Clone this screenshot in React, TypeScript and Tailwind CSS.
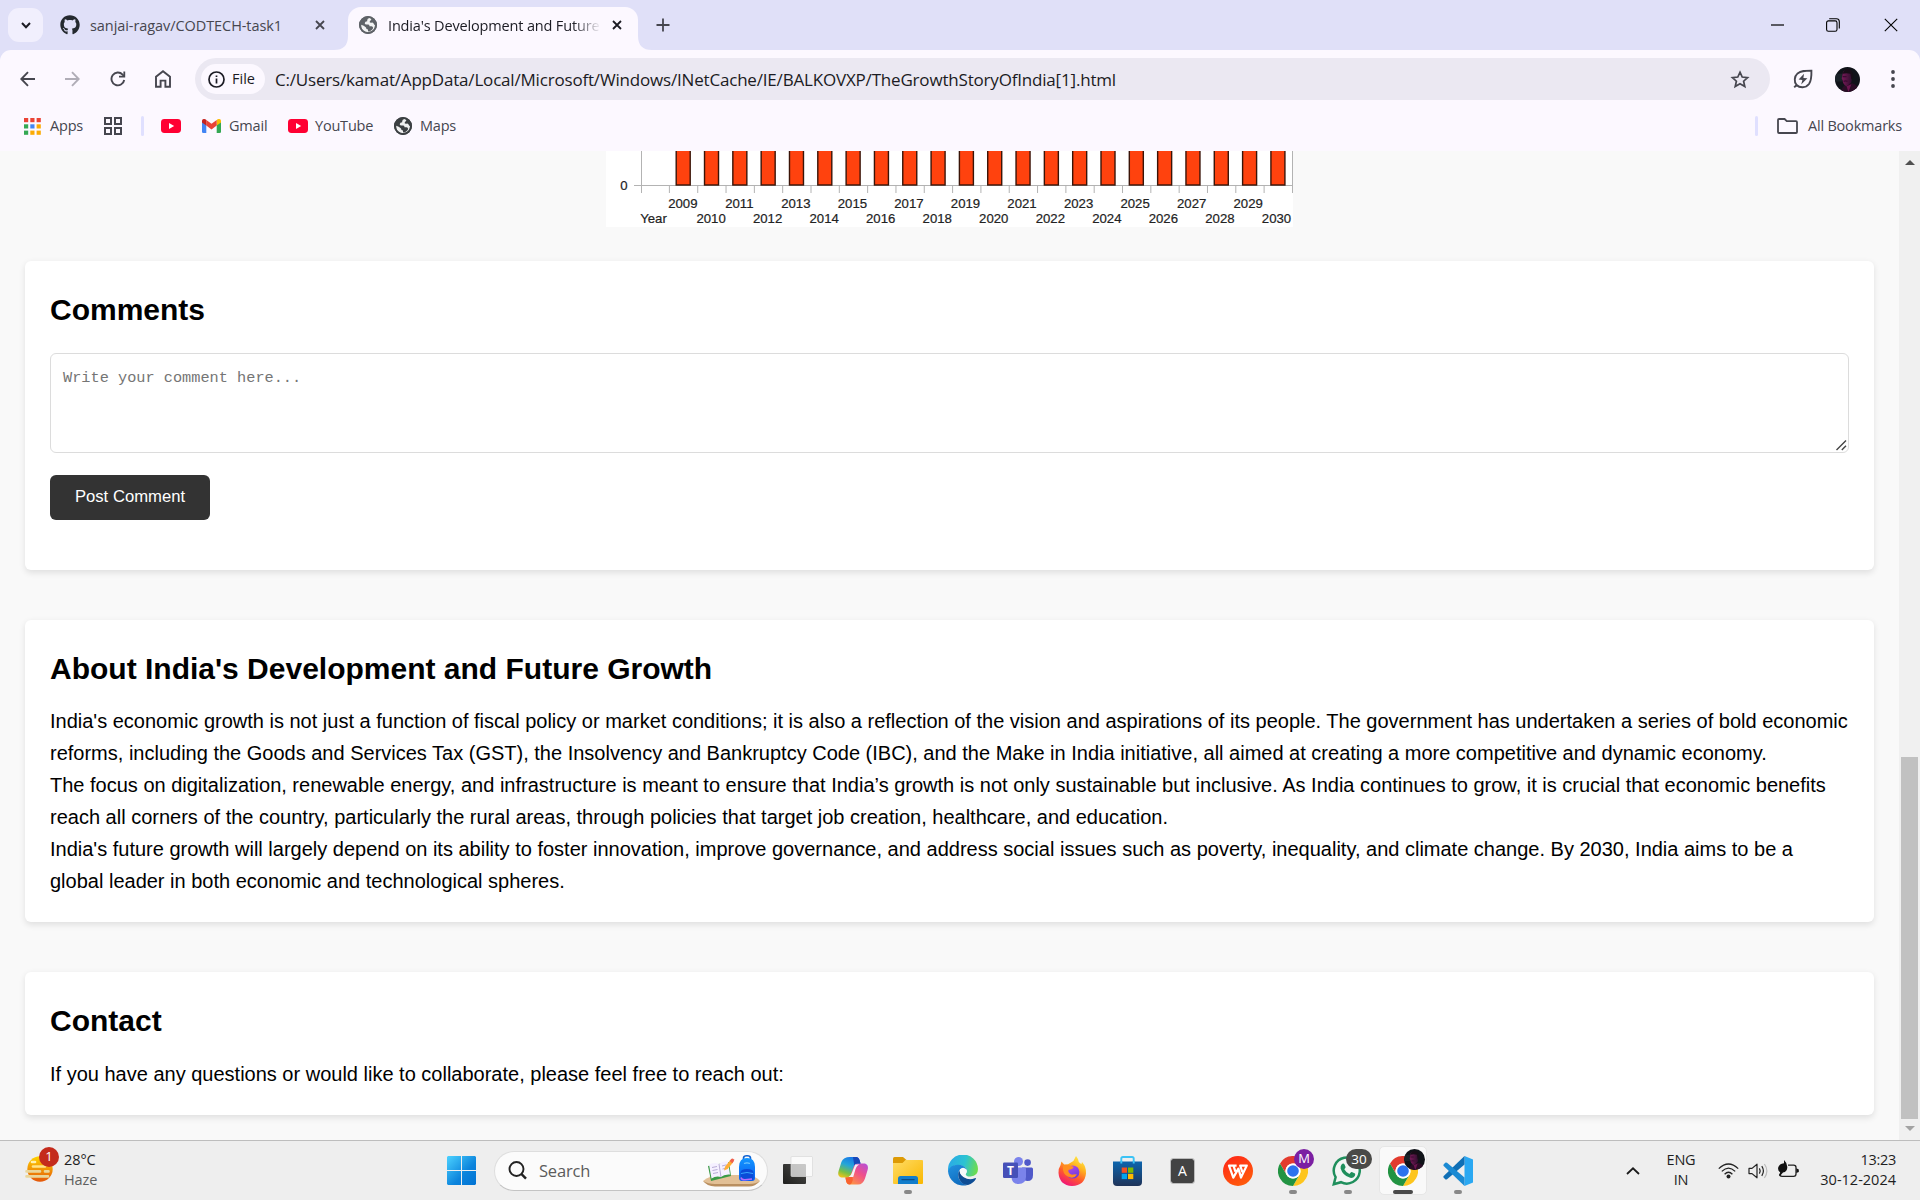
import type { ReactNode } from "react";
import { FaGithub } from "react-icons/fa";

const YEARS = Array.from({ length: 22 }, (_, i) => 2009 + i);

function Globe({ size, color }: { size: number; color: string }) {
  return (
    <svg width={size} height={size} viewBox="0 0 18 18" className="shrink-0">
      <circle cx="9" cy="9" r="9" fill={color} />
      <path d="M10.6 1.9 Q8.2 2.2 8.2 4.2 L8.2 5.2 Q6 5.2 5.7 7.2 Q5.8 8.4 7.6 8.4 L9.3 8.4 Q10.6 8.6 10.5 10.2 L12.6 10.3 Q13.9 10.6 14.2 12 Q12.6 15.2 9 15.6 L9 13.6 Q7 13.5 7 11.4 Q4.8 9.4 2.2 8.8 Q2 13.6 5.4 15.4 Q7.5 16.6 9.9 16.1 Q15.8 15 16 9 Q15.2 8.9 14.6 7.4 Q13.6 6.2 12.2 6.8 L10.8 6.6 L10.8 4.9 Q12.2 4.8 12.4 3 Z" fill="#fff" fillOpacity="0.92" />
      <circle cx="9" cy="9" r="8.1" fill="none" stroke={color} strokeWidth="1.8" />
    </svg>
  );
}

function YouTube() {
  return (
    <svg width="20" height="14" viewBox="0 0 20 14" className="shrink-0">
      <rect width="20" height="14" rx="3.4" fill="#ff0033" />
      <path d="M8 4 L13.2 7 L8 10 Z" fill="#fff" />
    </svg>
  );
}

function Avatar({ size, id }: { size: number; id: string }) {
  return (
    <svg width={size} height={size} viewBox="0 0 26 26" className="shrink-0">
      <defs>
        <clipPath id={id}><circle cx="13" cy="13" r="13" /></clipPath>
        <linearGradient id={id + "f"} x1="0" x2="1">
          <stop offset="0" stopColor="#7a1a5a" />
          <stop offset="1" stopColor="#2c0e2c" />
        </linearGradient>
      </defs>
      <g clipPath={`url(#${id})`}>
        <rect width="26" height="26" fill="#101319" />
        <path d="M0 7 H8 V15 H0 Z" fill="#1a2228" />
        <path d="M6 26 Q7 20 12 18 L18 17 Q24 19 26 26 Z" fill="#2a0d26" />
        <path d="M8 7 Q8 3 13 3 Q18 3 18 9 L17 16 L12 20 Q8 18 8 14 L7 12 Z" fill={`url(#${id}f)`} />
        <path d="M8 7 Q9 2 14 2 Q19 3 19 11 L17 13 L16 7 Q12 6 8 7 Z" fill="#170d17" />
        <path d="M8 10 H12 M9 15 Q11 14 13 15" stroke="#3b0b30" strokeWidth="1.3" fill="none" />
        <path d="M12 20 L14 26 L17 18 Z" fill="#6d1450" />
      </g>
    </svg>
  );
}

function TabCross({ color }: { color: string }) {
  return (
    <svg width="10" height="10" viewBox="0 0 10 10" className="shrink-0">
      <path d="M1 1 L9 9 M9 1 L1 9" stroke={color} strokeWidth="1.8" />
    </svg>
  );
}

function TabStrip() {
  return (
    <div className="flex h-[50px] shrink-0 items-end bg-[#e0e0f8]">
      <div className="mb-2 ml-2 flex h-[34px] w-[35px] shrink-0 items-center justify-center rounded-[11px] bg-[#f1effd]">
        <svg width="10" height="7" viewBox="0 0 10 7"><path d="M1 1 L5 5.2 L9 1" fill="none" stroke="#1b1b23" strokeWidth="2" /></svg>
      </div>
      <div className="ml-[17px] flex h-[50px] w-[266px] shrink-0 items-center">
        <FaGithub size={20} color="#24292f" className="shrink-0" />
        <span className="ml-[10px] w-[225px] whitespace-nowrap pt-px text-[14.5px] tracking-[-0.07px] text-[#46464f]">sanjai-ragav/CODTECH-task1</span>
        <TabCross color="#46464f" />
      </div>
      <svg width="14" height="14" viewBox="0 0 14 14" className="ml-[8px] shrink-0"><path d="M14 0 Q14 14 0 14 L14 14 Z" fill="#fcf8ff" /></svg>
      <div className="flex h-[43px] w-[290px] shrink-0 items-center rounded-t-[13px] bg-[#fcf8ff] pb-[7px] pl-[11px]">
        <Globe size={18} color="#5f6368" />
        <span className="ml-[11px] mr-[12px] w-[212px] whitespace-nowrap pt-px text-[14.5px] tracking-[-0.16px] text-[#1b1b23] [mask-image:linear-gradient(to_right,black_185px,transparent_213px)]">
          India's Development and Future
        </span>
        <TabCross color="#1b1b23" />
      </div>
      <svg width="14" height="14" viewBox="0 0 14 14" className="shrink-0"><path d="M0 0 Q0 14 14 14 L0 14 Z" fill="#fcf8ff" /></svg>
      <svg width="14" height="14" viewBox="0 0 14 14" className="mb-[18px] ml-1 shrink-0"><path d="M7 0.5 V13.5 M0.5 7 H13.5" stroke="#46464f" strokeWidth="1.8" /></svg>
      <div className="ml-auto mr-[22px] flex h-[50px] items-center">
        <svg width="13" height="2" viewBox="0 0 13 2" className="mr-[42px]"><rect y="0.4" width="13" height="1.2" fill="#000" /></svg>
        <svg width="14" height="14" viewBox="0 0 14 14" className="mr-[44px]">
          <rect x="0.6" y="2.9" width="10.4" height="10.4" rx="1.8" fill="none" stroke="#000" strokeWidth="1.1" />
          <path d="M3.2 0.7 H10.4 Q13.3 0.7 13.3 3.6 V10.6" fill="none" stroke="#000" strokeWidth="1.1" />
        </svg>
        <svg width="14" height="14" viewBox="0 0 14 14"><path d="M0.8 0.8 L13.2 13.2 M13.2 0.8 L0.8 13.2" stroke="#000" strokeWidth="1.1" /></svg>
      </div>
    </div>
  );
}

function Toolbar() {
  return (
    <div className="bg-[#e0e0f8]">
      <div className="flex h-[58px] items-center rounded-t-[11px] bg-[#fcf8ff] pl-5">
        <svg width="16" height="16" viewBox="0 0 16 16"><path d="M15 8 H1.5 M8 1.2 L1.3 8 L8 14.8" fill="none" stroke="#46464f" strokeWidth="1.9" /></svg>
        <svg width="16" height="16" viewBox="0 0 16 16" className="ml-7"><path d="M1 8 H14.5 M8 1.2 L14.7 8 L8 14.8" fill="none" stroke="#b0adb7" strokeWidth="1.9" /></svg>
        <svg width="16" height="16" viewBox="0 0 16 16" className="ml-[30px]">
          <path d="M14.2 9 A6.4 6.4 0 1 1 12.6 3.6 L14 5" fill="none" stroke="#46464f" strokeWidth="1.9" />
          <path d="M15.2 0.5 V6.6 H9 V4.8 H13.4 V0.5 Z" fill="#46464f" />
        </svg>
        <svg width="16" height="18" viewBox="0 0 16 18" className="ml-[29px]"><path d="M1 16.8 V6.8 L8 1.3 L15 6.8 V16.8 H10.4 V10.6 H5.6 V16.8 Z" fill="none" stroke="#46464f" strokeWidth="1.9" /></svg>
        <div className="ml-6 flex h-[42px] w-[1575px] shrink-0 items-center rounded-full bg-[#ebe8f2] pl-[6px]">
          <div className="flex h-[30px] w-[64px] shrink-0 items-center rounded-full bg-[#fcf8ff] pl-[7px]">
            <svg width="17" height="17" viewBox="0 0 17 17"><circle cx="8.5" cy="8.5" r="7.5" fill="none" stroke="#1b1b23" strokeWidth="1.7" /><path d="M8.5 7.5 V12.4 M8.5 4.4 V6.1" stroke="#1b1b23" strokeWidth="1.7" /></svg>
            <span className="ml-[7px] text-[14.5px] font-medium text-[#1b1b23]">File</span>
          </div>
          <span className="ml-[10px] whitespace-nowrap pt-px text-[17px] tracking-[-0.185px] text-[#1b1b23]">
            C:/Users/kamat/AppData/Local/Microsoft/Windows/INetCache/IE/BALKOVXP/TheGrowthStoryOfIndia[1].html
          </span>
          <svg width="20" height="19" viewBox="0 0 20 19" className="ml-auto mr-5"><path d="M10 2.2 L12.2 7 L17.6 7.6 L13.6 11.2 L14.8 16.5 L10 13.7 L5.2 16.5 L6.4 11.2 L2.4 7.6 L7.8 7 Z" fill="none" stroke="#46464f" strokeWidth="1.7" /></svg>
        </div>
        <svg width="20" height="20" viewBox="0 0 20 20" className="ml-[23px] shrink-0">
          <path d="M18.4 1.6 C18.6 8 18.4 11.6 16 15 C12.6 19.4 6.6 19 3.6 16 C0.8 12.6 1.2 7.4 4.6 4.4 C8 1.6 12 1.6 18.4 1.6 Z M3.6 16 L1.2 18.4" fill="none" stroke="#46464f" strokeWidth="1.9" />
          <path d="M11 4.8 L5.6 10.6 L9.4 10.9 L8.2 15.4 L14.4 9.3 L10.4 9 Z" fill="#46464f" />
        </svg>
        <div className="ml-[22px] shrink-0"><Avatar size={25} id="profile" /></div>
        <svg width="4" height="18" viewBox="0 0 4 18" className="ml-[31px] shrink-0"><g fill="#46464f"><circle cx="2" cy="2" r="1.9" /><circle cx="2" cy="9" r="1.9" /><circle cx="2" cy="16" r="1.9" /></g></svg>
      </div>
    </div>
  );
}

const DOTS = ["#ea4335", "#ea4335", "#ea4335", "#34a853", "#4285f4", "#fbab04", "#34a853", "#fbab04", "#fbab04"];

function Bookmarks() {
  return (
    <div className="flex h-[43px] shrink-0 items-center bg-[#fcf8ff] pb-[7px] pl-[24px] pr-[18px] text-[14.5px] tracking-[-0.2px] text-[#46464f]">
      <svg width="17" height="17" viewBox="0 0 17 17">
        {DOTS.map((c, i) => <rect key={i} x={(i % 3) * 6.3} y={Math.floor(i / 3) * 6.3} width="4.2" height="4.2" fill={c} />)}
      </svg>
      <span className="ml-[9px] w-[54px]">Apps</span>
      <svg width="18" height="18" viewBox="0 0 18 18"><path d="M1 1 H7 V7 H1 Z M11 1 H17 V7 H11 Z M1 11 H7 V17 H1 Z M11 11 H17 V17 H11 Z" fill="none" stroke="#46464f" strokeWidth="2" /></svg>
      <div className="ml-[19px] h-[20px] w-[3px] rounded bg-[#e0e0ff]" />
      <div className="ml-[17px]"><YouTube /></div>
      <svg width="19" height="14" viewBox="0 0 19 14" className="ml-[21px]">
        <path d="M0 2 V12.7 Q0 14 1.3 14 H4.3 V5 Z" fill="#4285f4" />
        <path d="M19 2 V12.7 Q19 14 17.7 14 H14.7 V5 Z" fill="#34a853" />
        <path d="M14.7 1.3 V6.6 L19 3.4 V2 C19 0 16.8 -0.6 15.2 0.6 Z" fill="#fbbc04" />
        <path d="M4.3 6.6 V1 L9.5 4.8 L14.7 1 V6.6 L9.5 10.5 Z" fill="#ea4335" />
        <path d="M0 2 V3.4 L4.3 6.6 V1.1 L3.8 0.6 C2.2 -0.6 0 0 0 2 Z" fill="#c5221f" />
      </svg>
      <span className="ml-2 w-[59px]">Gmail</span>
      <YouTube />
      <span className="ml-[7px] w-[79px]">YouTube</span>
      <Globe size={18} color="#3c4043" />
      <span className="ml-2">Maps</span>
      <div className="ml-auto h-[20px] w-[3px] rounded bg-[#e0e0ff]" />
      <svg width="21" height="16" viewBox="0 0 21 16" className="ml-[19px]"><path d="M1 2 Q1 1 2 1 H7.6 L9.8 3.2 H19 Q20 3.2 20 4.2 V14 Q20 15 19 15 H2 Q1 15 1 14 Z" fill="none" stroke="#46464f" strokeWidth="1.8" /></svg>
      <span className="ml-[10px]">All Bookmarks</span>
    </div>
  );
}

function Chart() {
  return (
    <svg width="687" height="76" viewBox="0 0 687 76" className="mx-auto block bg-white" fontFamily="Liberation Sans, Arial, sans-serif" fontSize="13.2" textAnchor="middle">
      <g stroke="#b3b3b3" strokeWidth="1" fill="none">
        <path d="M35.5 0 V42 M28 34.5 H686.5 V0 M686.5 34 V42" />
        {YEARS.map((y, i) => <path key={y} d={`M${63.4 + i * 28.32} 34 V42`} />)}
      </g>
      {YEARS.map((y, i) => <rect key={y} x={70.2 + i * 28.32} y="-5" width="14" height="39" fill="#ff420e" stroke="#3a1408" strokeWidth="1.4" />)}
      <g fill="#222" stroke="#222" strokeWidth="0.2">
        <text x="18" y="38.5">0</text>
        <text x="47.5" y="72">Year</text>
        {YEARS.map((y, i) => <text key={y} x={76.8 + i * 28.27} y={i % 2 ? 72 : 57}>{y}</text>)}
      </g>
    </svg>
  );
}

function Card({ title, children }: { title: string; children: ReactNode }) {
  return (
    <section className="rounded-[6px] bg-white p-[25px] shadow-[0_2.5px_6.25px_rgba(0,0,0,0.1)]">
      <h2 className="mb-[12px] text-[30px] font-bold leading-[48px]">{title}</h2>
      {children}
    </section>
  );
}

function Page() {
  return (
    <div className="flex h-[989px] shrink-0 overflow-hidden bg-[#f9f9f9]">
      <main className="w-[1899px] shrink-0 px-[25px] font-['Liberation_Sans',Arial,sans-serif] text-[20px] leading-[32px] text-black">
        <Chart />
        <div className="mt-[34px] flex flex-col gap-[50px]">
          <Card title="Comments">
            <div className="pb-[25px] pt-[7px]">
              <div className="flex h-[100px] items-end justify-between rounded-[6px] border border-[#dcdcdc] pb-[1px] pl-[12px] pr-[1px]">
                <span className="self-start pt-[13.5px] font-['Liberation_Mono',monospace] text-[15.27px] leading-[20px] text-[#757575]">Write your comment here...</span>
                <svg width="11" height="11" viewBox="0 0 11 11"><path d="M0.5 10 L10 0.5 M5.8 10 L10 5.8" stroke="#444" strokeWidth="1.4" /></svg>
              </div>
              <button className="mt-[22px] block h-[45px] w-[160px] rounded-[6px] bg-[#333] pb-[2px] text-[16.67px] leading-[21px] text-white">Post Comment</button>
            </div>
          </Card>
          <Card title="About India's Development and Future Growth">
            <p>India's economic growth is not just a function of fiscal policy or market conditions; it is also a reflection of the vision and aspirations of its people. The government has undertaken a series of bold economic reforms, including the Goods and Services Tax (GST), the Insolvency and Bankruptcy Code (IBC), and the Make in India initiative, all aimed at creating a more competitive and dynamic economy.</p>
            <p>The focus on digitalization, renewable energy, and infrastructure is meant to ensure that India’s growth is not only sustainable but inclusive. As India continues to grow, it is crucial that economic benefits reach all corners of the country, particularly the rural areas, through policies that target job creation, healthcare, and education.</p>
            <p>India's future growth will largely depend on its ability to foster innovation, improve governance, and address social issues such as poverty, inequality, and climate change. By 2030, India aims to be a global leader in both economic and technological spheres.</p>
          </Card>
          <Card title="Contact">
            <p className="pt-px">If you have any questions or would like to collaborate, please feel free to reach out:</p>
          </Card>
        </div>
      </main>
      <div className="flex w-[21px] flex-col items-center bg-[#f0f0f0] pb-[9px] pt-[9px]">
        <svg width="10" height="5" viewBox="0 0 10 5"><path d="M0 5 L5 0 L10 5 Z" fill="#505050" /></svg>
        <div className="mt-auto h-[362px] w-[17px] bg-[#c1c1c1]" />
        <svg width="10" height="5" viewBox="0 0 10 5" className="mt-[7px]"><path d="M0 0 L5 5 L10 0 Z" fill="#a3a3a3" /></svg>
      </div>
    </div>
  );
}

function AppCell({ children, mark, badge }: { children: ReactNode; mark?: "idle" | "active"; badge?: ReactNode }) {
  return (
    <div className="relative flex h-[59px] w-[55px] shrink-0 items-center justify-center">
      {mark === "active" && <div className="absolute left-[4px] top-[5px] h-[49px] w-[48px] rounded-[5px] border border-[#e6e6e6] bg-[#f9f9f9]" />}
      <div className="relative">{children}</div>
      {badge && <div className="absolute left-[29px] top-[8px]">{badge}</div>}
      {mark === "idle" && <div className="absolute bottom-[6px] left-[23.5px] h-[4px] w-[8px] rounded-full bg-[#888]" />}
      {mark === "active" && <div className="absolute bottom-[6px] left-[18px] h-[4px] w-[20px] rounded-full bg-[#4a4a4a]" />}
    </div>
  );
}

function Chrome() {
  return (
    <svg width="30" height="30" viewBox="0 0 30 30" className="block">
      <circle cx="15" cy="15" r="15" fill="#fff" />
      <path d="M15 7.5 H28 A15 15 0 0 0 2 7.5 L8.5 18.75 A7.5 7.5 0 0 1 15 7.5 Z" fill="#e33b2e" />
      <path d="M21.5 18.75 L15 30 A15 15 0 0 0 28 7.5 H15 A7.5 7.5 0 0 1 21.5 18.75 Z" fill="#fdc51e" />
      <path d="M8.5 18.75 L2 7.5 A15 15 0 0 0 15 30 L21.5 18.75 A7.5 7.5 0 0 1 8.5 18.75 Z" fill="#229342" />
      <circle cx="15" cy="15" r="7.5" fill="#fff" />
      <circle cx="15" cy="15" r="5.8" fill="#2b72ee" />
    </svg>
  );
}

function SearchArt() {
  return (
    <svg width="57" height="32" viewBox="0 0 57 32" className="block">
      <defs>
        <linearGradient id="pack" x1="0" y1="0" x2="0" y2="1"><stop offset="0" stopColor="#1296ff" /><stop offset="1" stopColor="#0a5cf0" /></linearGradient>
      </defs>
      <path d="M0 26 Q6 20 20 20 L44 20 Q53 21 57 26 Q52 31 46 31 H12 Q4 30 0 26 Z" fill="#e2c096" />
      <path d="M0 26 Q5 29 12 29 H46 Q53 29 57 26 Q52 31.5 46 31.5 H12 Q4 31 0 26 Z" fill="#b98f60" />
      <path d="M5 11 L26 7 L28 21 L8 26 Z" fill="#3b9a46" />
      <path d="M6 9.5 Q12 7 16 9 Q20 5.5 25 6.5 L27 19.5 Q21 19 18 22 Q13 20.5 8.5 23.5 Z" fill="#f5f0ff" />
      <path d="M16 9 L18 22 M9 12.5 L14 11.5 M9.5 15.5 L14.5 14.5 M10 18.5 L15 17.5 M19 11 L23.5 9.8 M19.5 14 L24 13" stroke="#b9add6" strokeWidth="1" fill="none" />
      <path d="M21 15.5 L22 11.8 L27.2 5.2 L30 7.4 L24.6 14 Z" fill="#ffae35" />
      <path d="M26.6 6 L28.2 4 Q29.5 3 30.7 4.2 Q31.6 5.2 30.6 6.6 L29.3 8.3 Z" fill="#f0604d" />
      <path d="M40.5 6 V3 Q40.5 0.8 44 0.8 Q47.5 0.8 47.5 3 V6" fill="none" stroke="#0d5fd0" strokeWidth="1.6" />
      <path d="M36 12 Q36 3 44 3 Q52 3 52 12 V23 Q52 26 49 26 H39 Q36 26 36 23 Z" fill="url(#pack)" />
      <path d="M37.5 17.5 Q37.5 14 44 14 Q50.5 14 50.5 17.5 V23 Q50.5 25 48.5 25 H39.5 Q37.5 25 37.5 23 Z" fill="#0b4bd8" />
      <path d="M38 18.5 Q44 16.5 50 18.5" stroke="#38a6ff" strokeWidth="1" fill="none" />
      <path d="M38 22.5 Q38.5 25 42 24.8 L49 24" stroke="#b66cff" strokeWidth="1.4" fill="none" />
      <path d="M41 8.5 Q44 7.2 47 8.5" stroke="#6cc4ff" strokeWidth="1.2" fill="none" />
    </svg>
  );
}

function Taskbar() {
  return (
    <div className="flex h-[60px] shrink-0 items-center border-t border-[#bdbdbd] bg-[#eeeeee] text-[14.5px] text-[#1f1f1f]">
      <div className="relative ml-[25px] h-[59px] w-[39px] shrink-0">
        <svg width="30" height="27" viewBox="0 0 30 27" className="mt-[15px]">
          <defs><linearGradient id="sun" x1="0" y1="0" x2="0" y2="1"><stop offset="0" stopColor="#ffd400" /><stop offset="1" stopColor="#e4570a" /></linearGradient></defs>
          <circle cx="15" cy="13" r="12.7" fill="url(#sun)" />
          <g strokeLinecap="round" strokeWidth="2.6" stroke="#ead69a" fill="none"><path d="M7 6 H10" stroke="#fff1b0" /><path d="M8 10.5 H20" stroke="#ffe488" /><path d="M1.5 15.4 H15 M20 15.4 H23.5 M1.5 20.4 H23" /></g>
        </svg>
        <div className="absolute left-[14px] top-[6px] flex h-5 w-5 items-center justify-center rounded-full bg-[#c42b1c] text-[13px] text-white">1</div>
      </div>
      <div className="w-[383px] shrink-0 pb-px leading-[20px]"><div className="tracking-[-0.1px]">28°C</div><div className="tracking-[-0.1px] text-[#5f5f5f]">Haze</div></div>
      <svg width="29" height="29" viewBox="0 0 29 29" className="shrink-0">
        <defs><linearGradient id="win" x1="0" y1="0" x2="1" y2="1"><stop offset="0" stopColor="#4cd2ff" /><stop offset="0.6" stopColor="#0c84dc" /><stop offset="1" stopColor="#0072d3" /></linearGradient></defs>
        <path d="M1 0 H14 V14 H0 V1 Z M15 0 H28 L29 1 V14 H15 Z M0 15 H14 V29 H1 L0 28 Z M15 15 H29 V28 L28 29 H15 Z" fill="url(#win)" />
      </svg>
      <div className="ml-[18px] flex h-[40px] w-[274px] shrink-0 items-center rounded-full border border-b-[#c4c4c4] border-[#dedede] bg-[#fbfbfb] pl-[13px] pr-[7px]">
        <svg width="19" height="19" viewBox="0 0 19 19"><circle cx="8.5" cy="8" r="7" fill="none" stroke="#222" strokeWidth="1.9" /><path d="M13.3 12.8 L18 17.6" stroke="#222" strokeWidth="2.4" /></svg>
        <span className="ml-[12px] pt-px text-[16.5px] tracking-[-0.2px] text-[#5c5c5c]">Search</span>
        <div className="ml-auto"><SearchArt /></div>
      </div>
      <div className="ml-[2px] flex">
        <AppCell>
          <svg width="30" height="29" viewBox="0 0 30 29" className="block">
            <defs><linearGradient id="tv" x1="1" y1="0" x2="0" y2="1"><stop offset="0" stopColor="#4b4b49" /><stop offset="1" stopColor="#1f1f1d" /></linearGradient></defs>
            <rect x="0" y="8" width="23" height="20" rx="1" fill="url(#tv)" />
            <rect x="8" y="0.5" width="21.5" height="20" rx="1" fill="#fff" fillOpacity="0.7" stroke="#d8d8d8" strokeWidth="0.7" />
          </svg>
        </AppCell>
        <AppCell>
          <svg width="30" height="28" viewBox="0 0 30 28" className="block">
            <defs>
              <linearGradient id="cpa" x1="0.6" y1="0" x2="0.2" y2="1"><stop offset="0" stopColor="#1676e8" /><stop offset="0.4" stopColor="#25a6d8" /><stop offset="0.75" stopColor="#7bc043" /><stop offset="1" stopColor="#f0c419" /></linearGradient>
              <linearGradient id="cpb" x1="0.8" y1="0" x2="0.2" y2="1"><stop offset="0" stopColor="#a44ef0" /><stop offset="0.5" stopColor="#ef4f8b" /><stop offset="1" stopColor="#ff9a3c" /></linearGradient>
            </defs>
            <path d="M12 0 H18 Q20.5 0 21.5 3 L22.5 6.5 H27 Q31 8 29.6 13 L27 21.5 Q25 27.5 20 27.5 H11.5 Q9 27.5 8.2 24.5 L7.4 20.5 L14 8 Z" fill="url(#cpb)" />
            <path d="M12 0 H18.5 Q21 0.4 21.8 4 L22.5 6.5 H19.5 Q16.5 6.5 15.5 10 L13 17.5 Q12 20.5 9 20.5 H3.5 Q-1 19.5 0.6 14 L3.4 5 Q5.5 0 12 0 Z" fill="url(#cpa)" />
            <path d="M15 0 H18.5 Q21 0.4 21.8 4 L22.5 6.5 H19.5 Q17.3 6.5 16.3 8.4 Z" fill="#1748b8" />
            <path d="M7.4 20.5 H9 Q12 20.5 13 17.5 L14 14.8 L14.8 23 Q13.5 27.5 11.5 27.5 Q9 27.5 8.2 24.5 Z" fill="#f9622f" />
            <path d="M17.2 7.4 H21.5 Q18.6 8.5 17.4 12.5 L15.2 20 H10.5 Q13 19 14 15.6 Z" fill="#f4f0f6" />
          </svg>
        </AppCell>
        <AppCell mark="idle">
          <svg width="30" height="27" viewBox="0 0 30 27" className="block">
            <defs><linearGradient id="fold" x1="0" y1="0" x2="1" y2="1"><stop offset="0" stopColor="#ffdc66" /><stop offset="1" stopColor="#f9b700" /></linearGradient></defs>
            <path d="M0 1.5 Q0 0 1.5 0 H10 L13.5 3 V8 H0 Z" fill="#dd9a05" />
            <path d="M0 6 H9.5 L12.5 3 H29 Q30 3 30 4 V26 Q30 27 29 27 H1 Q0 27 0 26 Z" fill="url(#fold)" />
            <path d="M5 27 V21.5 Q5 19 7.5 19 H22.5 Q25 19 25 21.5 V27 Z" fill="#127dcb" />
            <rect x="8.3" y="22" width="13.4" height="1.2" rx="0.6" fill="#0b4d86" />
          </svg>
        </AppCell>
        <AppCell>
          <svg width="30" height="31" viewBox="0 0 30 31" className="block">
            <defs>
              <linearGradient id="eda" x1="0" y1="0.3" x2="1" y2="0.5"><stop offset="0" stopColor="#2aa9e8" /><stop offset="0.55" stopColor="#2cc3d2" /><stop offset="1" stopColor="#6ddc4e" /></linearGradient>
              <linearGradient id="edb" x1="0" y1="0" x2="0.5" y2="1"><stop offset="0" stopColor="#2392e0" /><stop offset="1" stopColor="#0f6cbf" /></linearGradient>
            </defs>
            <path d="M0 15 A15 15 0 0 1 30 14 Q30 21 22.5 21.5 Q18 21.5 17.3 19.2 Q19.5 17 18.5 14.5 Q16.5 10 10 10 Q3 10 0 17 Z" fill="url(#eda)" />
            <path d="M0 16 Q2.5 9.5 10 9.8 Q16.5 10 18.5 14.5 L18 15.2 Q13 11.5 11 16 Q9 21 12 25.5 Q15 29.5 19.5 30 A15.3 15.3 0 0 1 0 16 Z" fill="url(#edb)" />
            <path d="M11.6 15 Q8.6 20 12 25.5 Q15 30 20 30 Q25.5 28.3 28 23.7 Q28 22.8 26.8 23.3 Q21 25.6 15.8 22.2 Q11.5 19 11.6 15 Z" fill="#0d4c94" />
            <path d="M17.6 19.4 Q19.6 17.2 18.4 14.5 Q15 11 12 14.5 Q10.8 18.5 15 21.6 Q18 23.5 22 23.8 Q18 21.5 17.6 19.4 Z" fill="#f4f8fa" />
          </svg>
        </AppCell>
        <AppCell>
          <svg width="30" height="27" viewBox="0 0 30 27" className="block">
            <circle cx="15.5" cy="4.5" r="4.5" fill="#7b83eb" /><circle cx="24.6" cy="5.6" r="3.3" fill="#5059c9" />
            <path d="M19 10.5 H28.6 Q30 10.5 30 12 V18 Q30 24 24.5 24 Q21 24 19 21 Z" fill="#5059c9" />
            <path d="M8.5 10.5 H21.5 Q23 10.5 23 12 V19.5 Q23 27 15.5 27 Q8.5 27 8.5 19.5 Z" fill="#7b83eb" />
            <rect x="0" y="5.5" width="15" height="15.5" rx="1.2" fill="#4650b8" />
            <text x="7.5" y="17.6" fontSize="12" fontWeight="700" textAnchor="middle" fill="#fff">T</text>
          </svg>
        </AppCell>
        <AppCell>
          <svg width="29" height="30" viewBox="0 0 29 30" className="block">
            <defs>
              <linearGradient id="ff" x1="0.8" y1="0" x2="0.3" y2="1"><stop offset="0" stopColor="#fff04a" /><stop offset="0.35" stopColor="#ffb21f" /><stop offset="0.65" stopColor="#ff5a2c" /><stop offset="1" stopColor="#f0127a" /></linearGradient>
              <linearGradient id="ffo" x1="0" y1="0" x2="0.6" y2="1"><stop offset="0" stopColor="#c04be6" /><stop offset="1" stopColor="#6b3be0" /></linearGradient>
            </defs>
            <path d="M18 0 Q20.5 3 20.8 6 L23.4 8.2 L24 6 Q28.5 11 28 17.5 Q26.8 29.5 14 30 Q1.5 29.3 0.5 17 Q0.4 12 2.6 9 L3.4 5.5 L6.2 8.6 L10 8.2 L15.4 5 Q16.5 3 18 0 Z" fill="url(#ff)" />
            <circle cx="14.8" cy="16" r="6.6" fill="url(#ffo)" />
            <path d="M5 10 Q8.5 8 11.8 9.6 L15.8 11 Q14.5 13.6 12 13.4 Q9.6 13.5 10.5 16 Q12 19 15 18.6 Q17 18 19 18.6 Q16.8 22.2 12.8 21.6 Q6 20 5 14 Z" fill="#ff8f20" />
          </svg>
        </AppCell>
        <AppCell>
          <svg width="29" height="30" viewBox="0 0 29 30" className="block">
            <defs><linearGradient id="store" x1="0" y1="0" x2="0" y2="1"><stop offset="0" stopColor="#0d65ae" /><stop offset="1" stopColor="#1f3358" /></linearGradient></defs>
            <path d="M8.3 7 V2.6 Q8.3 1 9.9 1 H19.1 Q20.7 1 20.7 2.6 V7" fill="none" stroke="#3cc3f5" strokeWidth="1.9" />
            <path d="M0 5.5 H29 V26 Q29 30 25 30 H4 Q0 30 0 26 Z" fill="url(#store)" />
            <path d="M8.3 5 V7.5 M20.7 5 V7.5" stroke="#3cc3f5" strokeWidth="1.9" />
            <rect x="8.7" y="11.5" width="5.3" height="5.3" fill="#f25022" /><rect x="15" y="11.5" width="5.3" height="5.3" fill="#7fba00" /><rect x="8.7" y="17.8" width="5.3" height="5.3" fill="#00a4ef" /><rect x="15" y="17.8" width="5.3" height="5.3" fill="#ffb900" />
          </svg>
        </AppCell>
        <AppCell><div className="flex h-[24px] w-[23px] items-center justify-center rounded-[2px] bg-[#434343] text-[14px] text-white outline outline-[#bcbcbc]">A</div></AppCell>
        <AppCell>
          <svg width="30" height="30" viewBox="0 0 30 30" className="block">
            <defs><linearGradient id="wps" x1="0" y1="0" x2="0.6" y2="1"><stop offset="0" stopColor="#ff2418" /><stop offset="1" stopColor="#ff5a0c" /></linearGradient></defs>
            <circle cx="15" cy="15" r="15" fill="url(#wps)" />
            <path d="M13.6 9.6 H6 L10.3 21.6 L15.4 12.6 L18 21.6 L23.8 9.6 H17.2 L19.4 16.2 M10.6 9.8 L12.4 15.6" fill="none" stroke="#fff" strokeWidth="2.2" strokeLinejoin="round" />
          </svg>
        </AppCell>
        <AppCell mark="idle" badge={<div className="flex h-5 w-5 items-center justify-center rounded-full bg-[#7b1fa2] text-[13px] text-white">M</div>}><Chrome /></AppCell>
        <AppCell mark="idle" badge={<div className="-ml-[3px] flex h-5 w-[26px] items-center justify-center rounded-full bg-[#4a4a48] text-[13.5px] text-white">30</div>}>
          <svg width="31" height="31" viewBox="0 0 31 31" className="block">
            <path d="M1.8 29.2 L3.6 22.2 A13 13 0 1 1 9 27.2 Z" fill="#f3f5f4" stroke="#1f8f5c" strokeWidth="2.5" />
            <path d="M9.6 9.4 Q11.2 7.6 12.4 9.2 L13.6 12 Q13.6 13 12.3 14.2 Q14 17.4 17.4 18.9 L19 17.2 Q19.6 16.8 20.4 17.2 L23 18.6 Q23.6 19.2 22.8 21 Q21.2 23.4 18.2 22.8 Q10.8 20.6 8.6 13.4 Q8.3 11 9.6 9.4 Z" fill="#1f8f5c" />
          </svg>
        </AppCell>
        <AppCell mark="active" badge={<Avatar size={21} id="badge" />}><Chrome /></AppCell>
        <AppCell mark="idle">
          <svg width="30" height="30" viewBox="0 0 30 30" className="block">
            <path d="M21.5 0 L30 3.5 V26.5 L21.5 30 Z" fill="#2aa8f2" />
            <path d="M21.5 0 V8.5 L4 23.3 Q3 23.9 2.2 23.2 L0.6 21.6 Q0 20.8 0.7 20 Z" fill="#0f6fb5" />
            <path d="M21.5 30 V21.5 L4 6.8 Q3 6.1 2.2 6.8 L0.6 8.4 Q0 9.2 0.7 10 Z" fill="#1b8ad3" />
          </svg>
        </AppCell>
      </div>
      <svg width="14" height="8" viewBox="0 0 14 8" className="ml-auto mr-[26px] shrink-0"><path d="M1 7 L7 1.3 L13 7" fill="none" stroke="#1b1b1b" strokeWidth="1.8" /></svg>
      <div className="w-[30px] shrink-0 pb-px text-center leading-[20px] tracking-[-0.2px]"><div>ENG</div><div>IN</div></div>
      <svg width="21" height="16" viewBox="0 0 21 16" className="ml-[22px] shrink-0">
        <g fill="none" stroke="#222" strokeWidth="1.3"><path d="M0.8 5.6 Q10.5 -3.6 20.2 5.6" /><path d="M3.8 8.4 Q10.5 1.8 17.2 8.4" /><path d="M6.6 11.2 Q10.5 7.4 14.4 11.2" /></g>
        <circle cx="10.5" cy="13.5" r="2" fill="#222" />
      </svg>
      <svg width="21" height="16" viewBox="0 0 21 16" className="ml-[9px] shrink-0">
        <g fill="none" stroke="#222" strokeWidth="1.2"><path d="M1 5.4 H4 L9 1.2 V14.8 L4 10.6 H1 Z" strokeLinejoin="round" /><path d="M11.4 5.4 Q13 8 11.4 10.6" /><path d="M13.8 3.2 Q17 8 13.8 12.8" /><path d="M16.4 1 Q21.4 8 16.4 15" stroke="#bbb" /></g>
      </svg>
      <svg width="21" height="18" viewBox="0 0 21 18" className="mb-[3px] ml-[9px] shrink-0">
        <path d="M10 5.2 H15.6 Q18 5.2 18 7.4 V14 Q18 16.4 15.6 16.4 H4 Q2 16.4 1.6 14.4" fill="none" stroke="#222" strokeWidth="1.3" />
        <path d="M18.3 8.3 L20.8 9.4 V12 L18.3 13 Z M6 0 Q9 2.6 9.3 7 Q9.4 11.5 5 12.6 L2 16 L1 15.2 L2.2 12.2 Q-0.4 10.8 0.2 7.5 Q1.2 3.8 6 3.2 Z" fill="#111" />
      </svg>
      <div className="ml-[19px] mr-[24px] w-[78px] shrink-0 pb-[2px] text-right leading-[20px]"><div className="tracking-[-0.3px]">13:23</div><div>30-12-2024</div></div>
    </div>
  );
}

export default function App() {
  return (
    <div className="flex h-[1200px] w-[1920px] flex-col overflow-hidden font-['Open_Sans','Noto_Sans',sans-serif]">
      <TabStrip />
      <Toolbar />
      <Bookmarks />
      <Page />
      <Taskbar />
    </div>
  );
}
